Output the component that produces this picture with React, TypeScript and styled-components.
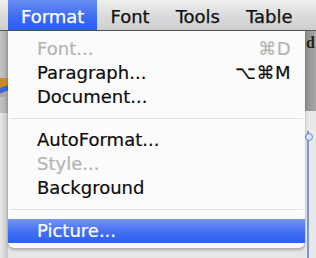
import React from "react";
import styled, { createGlobalStyle } from "styled-components";

const Global = createGlobalStyle`
  html, body { margin: 0; padding: 0; background: #e4e4e4; }
  #root { width: 316px; height: 258px; overflow: hidden; }
`;

const Screen = styled.div`
  width: 316px;
  height: 258px;
  display: grid;
  grid-template-rows: 31px 1fr;
  font-family: "DejaVu Sans", "Liberation Sans", sans-serif;
  background: #e2e2e2;
  overflow: hidden;
`;

const MenuBar = styled.div`
  display: flex;
  align-items: stretch;
  padding-left: 8px;
  height: 30px;
  background: linear-gradient(#eeeeee, #d9d9d9 60%, #cdcdcd);
  border-bottom: 1px solid #555;
`;

const MenuTitle = styled.div<{ $active?: boolean }>`
  padding: 3px 13px 0 13px;
  font-size: 18px;
  line-height: 27px;
  -webkit-text-stroke: 0.25px currentColor;
  color: ${(p) => (p.$active ? "#ffffff" : "#111111")};
  background: ${(p) =>
    p.$active ? "linear-gradient(#6a8ef5, #3f6df2 55%, #2a5cf0)" : "transparent"};
`;

const Workspace = styled.div`
  display: flex;
  align-items: flex-start;
  background: #e6e6e6;
`;

const LeftGutter = styled.div`
  width: 8px;
  align-self: stretch;
  display: grid;
  grid-template-rows: 82px 1fr;
`;

const GutterDark = styled.div`
  background: linear-gradient(90deg, #c4c4c4, #a9a9a9);
  display: flex;
  align-items: flex-end;
  padding-bottom: 16px;
`;

const GutterLight = styled.div`
  background: linear-gradient(90deg, #e8e8e8, #d4d4d4 60%, #c8c8c8);
`;

const IconChip = styled.div`
  width: 8px;
  height: 19px;
  background: linear-gradient(160deg, #c98a2a 0 45%, #3f66d8 46% 70%, #a9a9a9 71%);
`;

const Menu = styled.div`
  width: 297px;
  flex: none;
  background: #fbfbfb;
  padding: 6px 0 5px 0;
  border-radius: 0 0 6px 6px;
  box-shadow: 0 2px 3px rgba(0, 0, 0, 0.25), 0 0 1px rgba(0, 0, 0, 0.3);
  position: relative;
  z-index: 1;
`;

const Item = styled.div<{ $disabled?: boolean; $selected?: boolean }>`
  display: flex;
  justify-content: space-between;
  align-items: center;
  height: 24px;
  padding: 0 14px 0 29px;
  font-size: 18px;
  line-height: 24px;
  -webkit-text-stroke: 0.2px currentColor;
  color: ${(p) => (p.$selected ? "#ffffff" : p.$disabled ? "#b3b3b3" : "#0d0d0d")};
  background: ${(p) =>
    p.$selected ? "linear-gradient(#7393f6, #4672f3 50%, #2b5ef0)" : "transparent"};
`;

const Shortcut = styled.span`
  letter-spacing: 0.5px;
`;

const Separator = styled.div`
  height: 19px;
  display: flex;
  align-items: center;
  padding: 0 2px;
  &::after {
    content: "";
    flex: 1;
    height: 1px;
    background: #e0e0e0;
  }
`;

const RightGutter = styled.div`
  flex: 1;
  align-self: stretch;
  display: grid;
  grid-template-rows: 80px 1fr;
`;

const RightDark = styled.div`
  background: linear-gradient(90deg, #8e8e8e, #a8a8a8);
  display: flex;
  flex-direction: column;
  padding-top: 4px;
`;

const DocGlyph = styled.span`
  font-family: "Liberation Serif", serif;
  font-weight: bold;
  font-size: 16px;
  line-height: 16px;
  color: #2a2210;
  padding-left: 1px;
`;

const RightLight = styled.div`
  background: #e9e9e9;
  display: flex;
  padding-left: 2px;
`;

const ScrollLine = styled.div`
  width: 2px;
  background: linear-gradient(#e9e9e9 20px, #7d95d8 20px);
  position: relative;
`;

const Knob = styled.div`
  position: absolute;
  top: 22px;
  left: -2px;
  width: 6px;
  height: 6px;
  border-radius: 50%;
  border: 1px solid #6d88d0;
  background: #dfe6f7;
`;

type Entry =
  | { kind: "item"; label: string; key?: string; disabled?: boolean; selected?: boolean }
  | { kind: "sep" };

const entries: Entry[] = [
  { kind: "item", label: "Font...", key: "⌘D", disabled: true },
  { kind: "item", label: "Paragraph...", key: "⌥⌘M" },
  { kind: "item", label: "Document..." },
  { kind: "sep" },
  { kind: "item", label: "AutoFormat..." },
  { kind: "item", label: "Style...", disabled: true },
  { kind: "item", label: "Background" },
  { kind: "sep" },
  { kind: "item", label: "Picture...", selected: true },
];

const titles = ["Format", "Font", "Tools", "Table"];

export default function App() {
  return (
    <>
      <Global />
      <Screen>
        <MenuBar>
          {titles.map((t, i) => (
            <MenuTitle key={t} $active={i === 0}>
              {t}
            </MenuTitle>
          ))}
        </MenuBar>
        <Workspace>
          <LeftGutter>
            <GutterDark>
              <IconChip />
            </GutterDark>
            <GutterLight />
          </LeftGutter>
          <Menu>
            {entries.map((e, i) =>
              e.kind === "sep" ? (
                <Separator key={i} />
              ) : (
                <Item key={i} $disabled={e.disabled} $selected={e.selected}>
                  <span>{e.label}</span>
                  {e.key && <Shortcut>{e.key}</Shortcut>}
                </Item>
              )
            )}
          </Menu>
          <RightGutter>
            <RightDark>
              <DocGlyph>d</DocGlyph>
            </RightDark>
            <RightLight>
              <ScrollLine>
                <Knob />
              </ScrollLine>
            </RightLight>
          </RightGutter>
        </Workspace>
      </Screen>
    </>
  );
}
